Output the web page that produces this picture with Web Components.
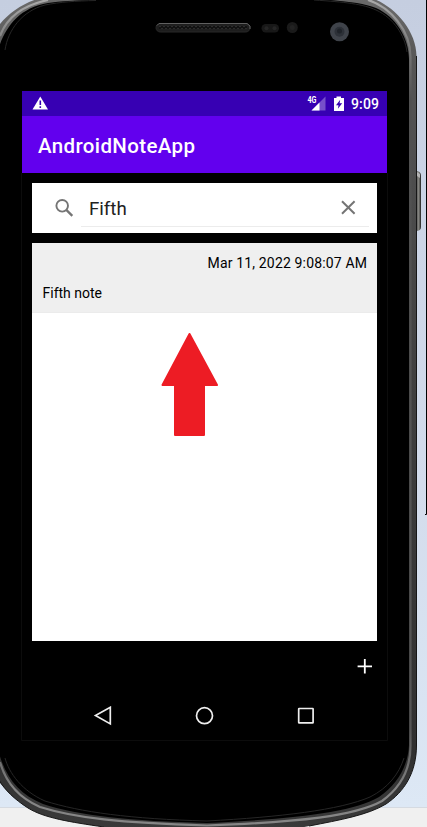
<!DOCTYPE html>
<html lang="en"><head><meta charset="utf-8"><title>AndroidNoteApp</title>
<style>html,body{margin:0;width:427px;height:827px;overflow:hidden;background:#000;font-family:Roboto,sans-serif}</style></head>
<body>
<phone-frame>
 <app-screen>
  <status-bar>9:09</status-bar>
  <app-bar>AndroidNoteApp</app-bar>
  <note-content>
   <search-field>Fifth</search-field>
   <note-list><note-item><span slot="date">Mar 11, 2022 9:08:07 AM</span>Fifth note</note-item></note-list>
  </note-content>
  <add-bar></add-bar>
  <nav-bar></nav-bar>
 </app-screen>
</phone-frame>
<script>
const define=(name,html)=>customElements.define(name,class extends HTMLElement{
  constructor(){super();const t=document.createElement('template');t.innerHTML=html;
    this.attachShadow({mode:'open'}).append(t.content.cloneNode(true));}
});
define('phone-frame',`<style>
:host{display:block;position:relative;box-sizing:border-box;width:427px;height:827px;padding:91px 40px 0 22px;overflow:hidden}
.art{position:absolute;inset:0;display:block}
::slotted(*){position:relative}
</style>
<svg class="art" width="427" height="827" viewBox="0 0 427 827">
<defs>
<linearGradient id="bg" x2="0" y2="1"><stop stop-color="#c5cee0"/><stop offset=".6" stop-color="#d3dcec"/><stop offset="1" stop-color="#dde8f5"/></linearGradient>
<linearGradient id="rim" x2="0" y2="1"><stop stop-color="#6a6a6a"/><stop offset=".08" stop-color="#555"/><stop offset=".45" stop-color="#404040"/><stop offset=".9" stop-color="#303030"/><stop offset="1" stop-color="#3a3a3a"/></linearGradient>
<linearGradient id="shine" gradientUnits="userSpaceOnUse" x1="0" y1="0" x2="0" y2="827"><stop stop-color="#aaa"/><stop offset=".06" stop-color="#777"/><stop offset=".12" stop-color="#505050"/><stop offset=".88" stop-color="#555"/><stop offset=".96" stop-color="#858585"/><stop offset="1" stop-color="#858585"/></linearGradient>
<linearGradient id="btn" x2="1" y2="0"><stop stop-color="#333"/><stop offset=".45" stop-color="#8a8a86"/><stop offset=".75" stop-color="#5d5d5a"/><stop offset="1" stop-color="#1b1b1b"/></linearGradient>
<pattern id="mesh" x="158" y="24" width="4" height="4" patternUnits="userSpaceOnUse"><rect width="4" height="4" fill="#111"/><path d="M0 0L2 3L4 0" stroke="#303030" fill="none"/></pattern>
</defs>
<rect width="427" height="807" fill="url(#bg)"/><rect y="807" width="427" height="20" fill="#f0f0f0"/><path d="M0 807.5H427" stroke="#d5dae1"/>
<path d="M426.500 0V514.500H425" stroke="#000" fill="none"/>
<path d="M416 171Q421 171 421 176V227Q421 231 416 231Z" fill="url(#btn)"/><path d="M417 172L420 174V178L417 176Z" fill="#b5b5b5"/>
<path d="M-3 28C7 14 20 5 37 -1L374 -1C395 7 416.500 31 416.500 56V745C416.500 773 404 792 386 804C368 815 340 820 309 826L290 830H120L104 827C70 822 44 818 28 808C14 799 5 790 -2 780Z" fill="url(#rim)"/>
<g fill="none">
<path d="M0 36C7 17 24 5 48 0M368 0C390 7 410.500 30 410.500 57V744C411 769 400 788 382 801C355 816 300 822 207 825.500C120 823 75 818 40 807C17 797 5 780 0 762" stroke="url(#shine)" stroke-width="2.200"/>
<path d="M416.500 56V745C416.500 773 404 792 386 804C368 815 340 820 309 826M104 827C70 822 44 818 28 808C14 799 5 790 -1 780" stroke="#171717" stroke-width="1"/>
</g>
<path d="M-2 50C5 28 18 8 48 3C70 0 95 0 110 -1L318 -1C345 1 363 3 376 8C396 17 409 38 409 59V745C408 766 397 785 379 797C352 813 290 819 207 823C130 821 80 816 43 804C18 794 4 775 -2 749Z" fill="#000"/>
<path d="M5 50C8 30 22 11 45 5C60 2 75 1 96 0.500M314 0C345 2 363 4 376 10C394 18 405 36 407 52M404 758C399 774 388 788 370 797C340 810 280 817 207 821C130 819 80 812 45 801C22 791 9 773 5 758" fill="none" stroke="#262626" stroke-width="1"/>
<rect x="156" y="23.500" width="94" height="8.500" rx="4.200" fill="#1d1d1d" stroke="#292929"/><rect x="159" y="25" width="88" height="4.500" fill="url(#mesh)"/><path d="M157 25.500L159 23.500H247L250 26V29" fill="none" stroke="#606060"/>
<rect x="261.500" y="24" width="17.500" height="8.500" rx="4.200" fill="#181818"/><circle cx="266.500" cy="28.300" r="2" fill="#252525"/><circle cx="274.500" cy="28.300" r="2" fill="#252525"/><circle cx="292.300" cy="27.500" r="5.500" fill="#1a1a1a"/><circle cx="292.300" cy="27.500" r="2.500" fill="#222"/>
<circle cx="339.500" cy="31.700" r="9.500" fill="#3f434a"/><circle cx="339.500" cy="31.700" r="5" fill="#2d3138"/><circle cx="339.500" cy="31" r="2.500" fill="#1f2329"/>
<path d="M21.500 173V740.500H387.500V173" fill="none" stroke="#0c0c0c"/>
</svg><slot></slot>`);
define('app-screen',`<style>:host{display:flex;flex-direction:column;width:365px;height:649px;background:#000}</style><slot></slot>`);
define('status-bar',`<style>:host{display:flex;align-items:center;box-sizing:border-box;height:25px;padding:0 8px 0 10px;background:#3700b3;color:#fff;font:500 14px/26px Roboto,sans-serif}
.right{display:flex;align-items:center;margin-left:auto}.net{margin-right:7px}.bat{margin-right:7px}.time{letter-spacing:.1px}svg{display:block}</style>
<svg width="17" height="15" viewBox="0 0 17 15"><path d="M8.300 .5L16 13.500H.5Z" fill="#fff"/><path d="M8.300 4.500V9M8.300 10.200V12" stroke="#3700b3" stroke-width="1.600"/></svg>
<div class="right"><svg class="net" width="19" height="16" viewBox="0 0 19 16"><path d="M18.500 .5V14.500H4.500Z" fill="#7650ca"/><path d="M12.500 6.500V14.500H4.500Z" fill="#fff"/><text x=".5" y="7" fill="#fff" font-family="Roboto" font-size="8.500" font-weight="700" textLength="9" lengthAdjust="spacingAndGlyphs">4G</text></svg>
<svg class="bat" width="11" height="16" viewBox="0 0 11 16"><path d="M3.500 .5H8V2H11V15H1V2H3.500Z" fill="#fff"/><path d="M7.200 3.800L3 9.300H5.500L4.900 12.800L9.200 7.200H6.600Z" fill="#3700b3"/></svg><span class="time"><slot></slot></span></div>`);
define('app-bar',`<style>:host{display:flex;align-items:center;box-sizing:border-box;height:57px;padding:3px 16px 0;background:#6200ee;color:#fff;font:500 20.500px/24px Roboto,sans-serif;letter-spacing:.37px}</style><slot></slot>`);
define('note-content',`<style>:host{display:flex;flex-direction:column;gap:10px;padding:10px 10px 0}</style><slot></slot>`);
define('search-field',`<style>:host{display:flex;box-sizing:border-box;height:50px;padding:0 8px 6px 22px;background:#fff;color:#212121;font:400 18.700px/52px Roboto,sans-serif}
svg{display:block}.search{margin-top:14px;margin-right:5px}.field{display:flex;flex:1;box-sizing:border-box;height:44px;border-bottom:1px solid #ececec;padding-left:8px}.close{margin:16px 13px 0 auto}</style>
<svg class="search" width="22" height="22" viewBox="0 0 22 22" fill="none" stroke="#757575"><circle cx="8.200" cy="8.800" r="5.800" stroke-width="1.900"/><path d="M12.300 12.900L18.300 18.900" stroke-width="2.300"/></svg><div class="field"><slot></slot><svg class="close" width="16" height="16" viewBox="0 0 16 16"><path d="M2 2.200L14.600 14.800M14.600 2.200L2 14.800" stroke="#757575" stroke-width="2"/></svg></div>`);
define('note-list',`<style>:host{display:block;position:relative;height:398px;background:#fff}.arrow{position:absolute;left:129px;top:89px}</style><slot></slot>
<svg class="arrow" width="58" height="106" viewBox="0 0 58 106"><path d="M28.500 2L56 53H43V103H14V53H1.500Z" fill="#ed1c24" stroke="#ed1c24" stroke-width="2" stroke-linejoin="round"/></svg>`);
define('note-item',`<style>:host{display:flex;flex-direction:column;box-sizing:border-box;height:70px;padding:10px 10px 0;background:#efefef;border-bottom:1px solid #ebebeb;color:#000;font:400 14px/20px Roboto,sans-serif;gap:10px}.date{align-self:flex-end;letter-spacing:.16px;margin-right:-.16px}.text{padding-left:.5px}</style><div class="date"><slot name="date"></slot></div><div class="text"><slot></slot></div>`);
define('add-bar',`<style>:host{display:flex;justify-content:flex-end;align-items:center;height:50px;padding-right:14px}svg{display:block}</style><svg width="16" height="16" viewBox="0 0 16 16"><path d="M7.800 1V15.500M.6 8.300H15" stroke="#fff" stroke-width="1.800"/></svg>`);
define('nav-bar',`<style>:host{display:flex;height:49px;align-items:center;justify-content:space-between;padding:0 71px}svg{display:block}</style>
<svg width="20" height="20" viewBox="0 0 20 20"><path d="M17.300 1.300V17.900L2.500 9.600Z" fill="none" stroke="#eee" stroke-width="1.700"/></svg>
<svg width="20" height="20" viewBox="0 0 20 20"><circle cx="9.500" cy="9.700" r="8" fill="none" stroke="#eee" stroke-width="1.700"/></svg>
<svg width="20" height="20" viewBox="0 0 20 20"><rect x="2.700" y="2.500" width="14.400" height="14.400" rx=".5" fill="none" stroke="#eee" stroke-width="1.700"/></svg>`);
</script></body></html>
